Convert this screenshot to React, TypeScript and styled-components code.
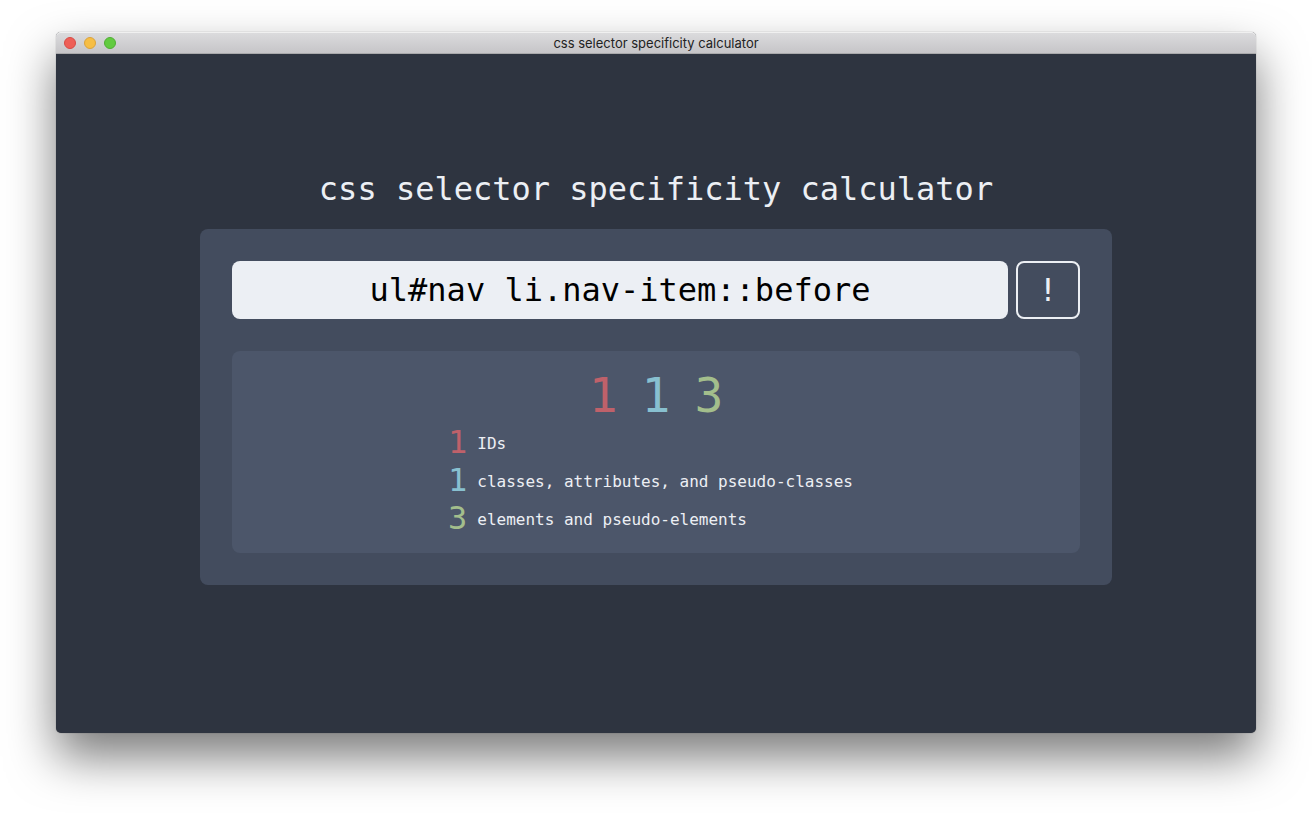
import React, { useState } from "react";
import styled, { createGlobalStyle } from "styled-components";

const mono = `"DejaVu Sans Mono", "Liberation Mono", monospace`;

const GlobalStyle = createGlobalStyle`
  * { box-sizing: border-box; }
  html, body, #root { height: 100%; }
  body { margin: 0; background: #fff; -webkit-font-smoothing: antialiased; }
`;

const Desktop = styled.div`
  display: flex;
  min-height: 100%;
  padding: 32px 56px 80px;
`;

const Window = styled.section`
  flex: 1;
  display: flex;
  flex-direction: column;
  border-radius: 5px;
  background: #2e3440;
  box-shadow: 0 0 1px rgba(0, 0, 0, 0.5), 0 24px 48px rgba(0, 0, 0, 0.52);
`;

const TitleBar = styled.header`
  display: grid;
  grid-template-columns: 1fr auto 1fr;
  align-items: center;
  height: 22px;
  padding: 0 8px;
  border-bottom: 1px solid #a9a9ab;
  border-radius: 5px 5px 0 0;
  background: linear-gradient(#dcdcde, #c6c5c8);
  box-shadow: inset 0 1px #f0f0f0;
`;

const Lights = styled.div`
  display: flex;
  gap: 8px;
`;

const Light = styled.button<{ $fill: string; $edge: string }>`
  width: 12px;
  height: 12px;
  padding: 0;
  border: 1px solid ${(p) => p.$edge};
  border-radius: 50%;
  background: ${(p) => p.$fill};
`;

const WindowTitle = styled.span`
  color: #222;
  font: 13px/20px Inter, "Liberation Sans", sans-serif;
`;

const Main = styled.main`
  flex: 1;
  display: flex;
  flex-direction: column;
  align-items: center;
  justify-content: center;
  padding: 0 144px 33px;
  color: #eceff4;
  font-family: ${mono};
`;

const Heading = styled.h1`
  margin: 0 0 20px;
  font-size: 32px;
  font-weight: 400;
  line-height: 40px;
`;

const Card = styled.form`
  width: 100%;
  padding: 32px;
  border-radius: 8px;
  background: #434c5e;
`;

const InputRow = styled.div`
  display: flex;
  gap: 8px;
  margin-bottom: 32px;
`;

const SelectorInput = styled.input`
  flex: 1;
  min-width: 0;
  height: 58px;
  padding: 0 8px;
  border: 0;
  border-radius: 8px;
  background: #eceff4;
  color: #000;
  font: 32px ${mono};
  text-align: center;
`;

const ImportantButton = styled.button`
  width: 64px;
  height: 58px;
  padding: 0;
  border: 2px solid #eceff4;
  border-radius: 8px;
  background: transparent;
  color: #eceff4;
  font: 32px ${mono};
`;

const Results = styled.div`
  display: flex;
  flex-direction: column;
  align-items: center;
  padding: 16px;
  border-radius: 8px;
  background: #4c566a;
`;

const Score = styled.div`
  display: flex;
  gap: 24px;
  font-size: 48px;
  line-height: 56px;
`;

const Count = styled.span<{ $color: string }>`
  color: ${(p) => p.$color};
`;

const Legend = styled.ul`
  width: 416px;
  margin: 0;
  padding: 0;
  list-style: none;
`;

const LegendItem = styled.li`
  display: flex;
  align-items: center;
  gap: 10px;
  line-height: 38px;

  ${Count} {
    font-size: 32px;
  }
`;

const LegendLabel = styled.span`
  padding-top: 4px;
  font-size: 16px;
  line-height: 24px;
`;

const counts = [
  { value: 1, color: "#bf616a", label: "IDs" },
  { value: 1, color: "#88c0d0", label: "classes, attributes, and pseudo-classes" },
  { value: 3, color: "#a3be8c", label: "elements and pseudo-elements" },
];

export default function App() {
  const [selector, setSelector] = useState("ul#nav li.nav-item::before");

  return (
    <>
      <GlobalStyle />
      <Desktop>
        <Window>
          <TitleBar>
            <Lights>
              <Light type="button" aria-label="Close" $fill="#ee5f57" $edge="#d84b45" />
              <Light type="button" aria-label="Minimize" $fill="#f6be45" $edge="#dba33c" />
              <Light type="button" aria-label="Zoom" $fill="#62cb40" $edge="#50ae34" />
            </Lights>
            <WindowTitle>css selector specificity calculator</WindowTitle>
          </TitleBar>
          <Main>
            <Heading>css selector specificity calculator</Heading>
            <Card onSubmit={(e) => e.preventDefault()}>
              <InputRow>
                <SelectorInput
                  aria-label="CSS selector"
                  spellCheck={false}
                  value={selector}
                  onChange={(e) => setSelector(e.target.value)}
                />
                <ImportantButton type="button" aria-label="Important">!</ImportantButton>
              </InputRow>
              <Results>
                <Score>
                  {counts.map((c) => (
                    <Count key={c.label} $color={c.color}>{c.value}</Count>
                  ))}
                </Score>
                <Legend>
                  {counts.map((c) => (
                    <LegendItem key={c.label}>
                      <Count $color={c.color}>{c.value}</Count>
                      <LegendLabel>{c.label}</LegendLabel>
                    </LegendItem>
                  ))}
                </Legend>
              </Results>
            </Card>
          </Main>
        </Window>
      </Desktop>
    </>
  );
}
